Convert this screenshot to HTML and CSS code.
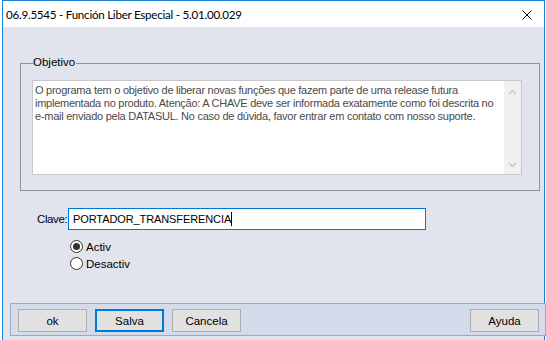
FILE: index.html
```html
<!DOCTYPE html>
<html lang="pt">
<head>
<meta charset="utf-8">
<title>Función Liber Especial</title>
<link rel="stylesheet" href="styles.css">
</head>
<body>
<div class="window">
  <div class="titlebar">
    <span class="title">06.9.5545 - Función Liber Especial - 5.01.00.029</span>
    <svg class="close" width="10" height="10" viewBox="0 0 10 10"><path d="M0.5 0.5 L9.5 9.5 M9.5 0.5 L0.5 9.5" stroke="#000" stroke-width="1" fill="none"/></svg>
  </div>
  <div class="client">
    <div class="group">
      <span class="group-label">Objetivo</span>
      <div class="memo">
        <div class="memo-text">O programa tem o objetivo de liberar novas funções que fazem parte de uma release futura implementada no produto. Atenção: A CHAVE deve ser informada exatamente como foi descrita no e-mail enviado pela DATASUL. No caso de dúvida, favor entrar em contato com nosso suporte.</div>
        <div class="scrollbar">
          <svg width="9" height="6" viewBox="0 0 9 6"><path d="M1 5 L4.5 1.5 L8 5" stroke="#c2c2c2" stroke-width="1.2" fill="none"/></svg>
          <svg width="9" height="6" viewBox="0 0 9 6"><path d="M1 1 L4.5 4.5 L8 1" stroke="#c2c2c2" stroke-width="1.2" fill="none"/></svg>
        </div>
      </div>
    </div>
    <div class="field-row">
      <label class="field-label">Clave:</label>
      <div class="input"><span>PORTADOR_TRANSFERENCIA</span><span class="caret"></span></div>
    </div>
    <div class="radios">
      <div class="radio-row"><span class="radio checked"></span><span>Activ</span></div>
      <div class="radio-row"><span class="radio"></span><span>Desactiv</span></div>
    </div>
    <div class="button-panel">
      <div class="btn">ok</div>
      <div class="btn default">Salva</div>
      <div class="btn">Cancela</div>
      <div class="spacer"></div>
      <div class="btn">Ayuda</div>
    </div>
  </div>
</div>
</body>
</html>
```
FILE: styles.css
```css
html, body {
  margin: 0;
  padding: 0;
  background: #ffffff;
  width: 546px;
  height: 340px;
  overflow: hidden;
}
body {
  font-family: "Liberation Sans", Arial, sans-serif;
  font-size: 11px;
  color: #000;
}
.window {
  margin-left: 2px;
  width: 541px;
  height: 339px;
  border: 1px solid #1c7fd6;
  border-bottom: none;
  display: flex;
  flex-direction: column;
  background: #e1e4ec;
}
.titlebar {
  height: 26px;
  background: #ffffff;
  display: flex;
  align-items: center;
  padding-left: 3px;
  padding-right: 12px;
  flex: none;
}
.title {
  font-family: Lato, "Noto Sans", sans-serif;
  font-size: 11.6px;
  letter-spacing: -0.25px;
  color: #000;
  flex: 1;
  padding-top: 1px;
}
.close {
  display: block;
  margin-top: 1px;
}
.client {
  flex: 1;
  display: flex;
  flex-direction: column;
  padding-left: 7px;
}
.group {
  position: relative;
  margin: 36px 0 0 10px;
  width: 507px;
  border: 1px solid #8c929c;
  padding: 16px 0 0 11px;
  box-sizing: content-box;
  height: 110px;
}
.group-label {
  position: absolute;
  top: -8px;
  left: 12px;
  background: #e1e4ec;
  padding: 0 1px 0 0;
  line-height: 13px;
  font-size: 11.5px;
  color: #000;
}
.memo {
  width: 488px;
  height: 93px;
  border: 1px solid #c8c8c8;
  background: #fff;
  display: flex;
}
.memo-text {
  flex: 1;
  padding: 3px 1px 0 2px;
  line-height: 13px;
  color: #4a4a4a;
  letter-spacing: -0.26px;
}
.scrollbar {
  width: 17px;
  background: #f0f0f0;
  display: flex;
  flex-direction: column;
  justify-content: space-between;
  align-items: center;
  padding: 8px 0 6px;
  box-sizing: border-box;
}
.scrollbar svg {
  display: block;
}
.field-row {
  display: flex;
  align-items: center;
  margin-top: 17px;
  padding-left: 27px;
}
.field-label {
  width: 31px;
  box-sizing: border-box;
  padding-right: 3px;
  text-align: right;
  white-space: nowrap;
  color: #000;
  font-size: 11.5px;
  letter-spacing: -0.4px;
}
.input {
  width: 352px;
  height: 20px;
  border: 1px solid #0078d7;
  background: #fff;
  display: flex;
  align-items: center;
  padding-left: 4px;
  font-size: 11px;
  letter-spacing: -0.1px;
}
.caret {
  width: 1px;
  height: 14px;
  background: #000;
  margin-left: 0;
}
.radios {
  display: flex;
  flex-direction: column;
  margin-top: 8px;
  padding-left: 60px;
}
.radio-row {
  display: flex;
  align-items: center;
  height: 17px;
  gap: 3px;
  font-size: 11.5px;
}
.radio {
  width: 11px;
  height: 11px;
  border: 1px solid #333;
  border-radius: 50%;
  background: #fff;
  display: flex;
  align-items: center;
  justify-content: center;
}
.radio.checked::after {
  content: "";
  width: 7px;
  height: 7px;
  border-radius: 50%;
  background: #333;
}
.button-panel {
  margin-top: auto;
  margin-bottom: 4px;
  width: 521px;
  border: 1px solid #a3a9b3;
  background: #d4dcec;
  display: flex;
  align-items: flex-start;
  padding: 5px 6px 0 7px;
  gap: 8px;
  box-sizing: content-box;
  height: 26px;
}
.spacer {
  flex: 1;
}
.btn {
  width: 67px;
  height: 21px;
  border: 1px solid #adadad;
  background: #e1e1e1;
  display: flex;
  align-items: center;
  justify-content: center;
  font-size: 11.5px;
}
.btn.default {
  width: 65px;
  height: 19px;
  border: 2px solid #0078d7;
}
```
